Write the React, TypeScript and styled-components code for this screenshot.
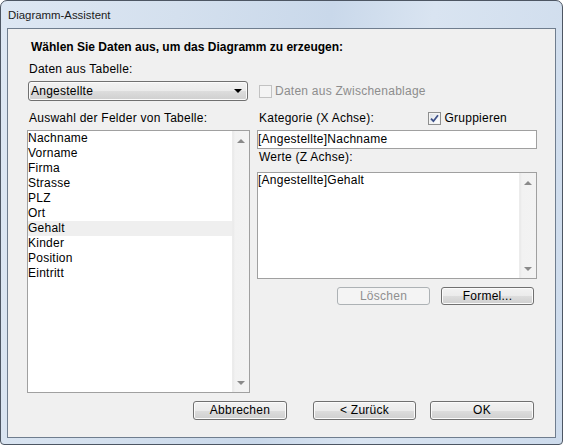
import React from "react";
import styled, { createGlobalStyle } from "styled-components";

const Global = createGlobalStyle`
  html, body { margin: 0; padding: 0; background: #ffffff; }
  body { font-family: "Liberation Sans", Arial, sans-serif; font-size: 12px; letter-spacing: 0.25px; color: #000; }
  * { box-sizing: border-box; }
`;

const Window = styled.div`
  width: 563px;
  height: 445px;
  display: flex;
  flex-direction: column;
  border: 1px solid #4d5663;
  border-radius: 7px 7px 4px 4px;
  background: linear-gradient(100deg, #dde7f3 0%, #d4e0ee 28%, #c9d8ea 52%, #d9e4f1 68%, #cddbec 100%);
  overflow: hidden;
`;

const TitleBar = styled.div`
  flex: none;
  height: 27px;
  display: flex;
  align-items: center;
  padding-left: 7px;
  font-size: 11.4px;
  letter-spacing: 0;
  color: #1a1a1a;
`;

const Client = styled.div`
  flex: 1;
  margin: 0 6px 6px;
  border: 1px solid #6f7d8e;
  background: #f0f0f0;
  padding: 11px 18px 0 19px;
  display: flex;
  flex-direction: column;
`;

const Heading = styled.div`
  font-weight: bold;
  letter-spacing: 0;
  line-height: 15px;
  margin-left: 4px;
`;

const Caption = styled.div<{ $top?: number; $left?: number; $disabled?: boolean }>`
  line-height: 15px;
  margin-top: ${(p) => p.$top ?? 0}px;
  margin-left: ${(p) => p.$left ?? 0}px;
  color: ${(p) => (p.$disabled ? "#8d8d8d" : "#000")};
  white-space: nowrap;
`;

const TwoCols = styled.div<{ $top: number }>`
  display: grid;
  grid-template-columns: 223px 280px;
  column-gap: 7px;
  margin-top: ${(p) => p.$top}px;
`;

const Row = styled.div`
  display: flex;
  align-items: center;
`;

const Combo = styled.div`
  width: 220px;
  height: 20px;
  margin-left: 1px;
  border: 1px solid #707070;
  border-radius: 3px;
  background: linear-gradient(#f2f2f2 0%, #ebebeb 50%, #dddddd 51%, #cfcfcf 100%);
  box-shadow: inset 0 0 0 1px #fbfbfb;
  display: flex;
  align-items: center;
  justify-content: space-between;
  padding: 0 5px 0 2px;
`;

const ComboArrow = styled.span`
  width: 0;
  height: 0;
  border-left: 4px solid transparent;
  border-right: 4px solid transparent;
  border-top: 4px solid #000;
`;

const CheckLabel = styled.label<{ $left?: number; $auto?: boolean; $right?: number }>`
  display: flex;
  align-items: center;
  gap: 3px;
  margin-left: ${(p) => (p.$auto ? "auto" : `${p.$left ?? 0}px`)};
  margin-right: ${(p) => p.$right ?? 0}px;
  line-height: 15px;
  white-space: nowrap;
`;

const Box = styled.span<{ $disabled?: boolean }>`
  width: 13px;
  height: 13px;
  flex: none;
  display: flex;
  align-items: center;
  justify-content: center;
  border: 1px solid ${(p) => (p.$disabled ? "#c2c2c2" : "#8e8f8f")};
  background: ${(p) =>
    p.$disabled ? "#f4f4f4" : "linear-gradient(135deg, #d8dde3 0%, #f4f6f8 60%, #ffffff 100%)"};
  box-shadow: ${(p) => (p.$disabled ? "none" : "inset 0 0 0 1px #f4f4f4")};
`;

const ListBox = styled.div<{ $height: number }>`
  height: ${(p) => p.$height}px;
  border: 1px solid #a0a0a0;
  background: #fff;
  display: flex;
`;

const ListItems = styled.div`
  flex: 1;
  display: flex;
  flex-direction: column;
`;

const Item = styled.div<{ $selected?: boolean }>`
  height: 15px;
  line-height: 15px;
  padding-left: 0;
  background: ${(p) => (p.$selected ? "#efefef" : "transparent")};
  white-space: nowrap;
`;

const ScrollBar = styled.div`
  width: 17px;
  flex: none;
  background: linear-gradient(to right, #e9e9e9 0, #f2f2f2 2px, #f3f3f3 100%);
  border-left: 1px solid #ececec;
  display: flex;
  flex-direction: column;
  justify-content: space-between;
  align-items: center;
  padding: 8px 0 7px;
`;

const Arrow = styled.span<{ $down?: boolean }>`
  width: 0;
  height: 0;
  border-left: 4px solid transparent;
  border-right: 4px solid transparent;
  ${(p) => (p.$down ? "border-top: 4px solid #8a8a8a;" : "border-bottom: 4px solid #8a8a8a;")}
`;

const TextField = styled.div`
  height: 19px;
  border: 1px solid #a0a0a0;
  background: #fff;
  line-height: 16px;
  padding-left: 0;
  white-space: nowrap;
`;

const RightCol = styled.div`
  display: flex;
  flex-direction: column;
`;

const Spacer = styled.div<{ $h: number }>`
  height: ${(p) => p.$h}px;
  flex: none;
`;

const ButtonRow = styled.div<{ $top: number }>`
  display: flex;
  justify-content: flex-end;
  gap: 11px;
  padding-right: 3px;
  margin-top: ${(p) => p.$top}px;
`;

const Button = styled.button<{ $width: number; $height?: number; $gapRight?: number }>`
  width: ${(p) => p.$width}px;
  height: ${(p) => p.$height ?? 19}px;
  margin-right: ${(p) => p.$gapRight ?? 0}px;
  padding: 0;
  font-family: "Liberation Sans", Arial, sans-serif;
  font-size: 12px;
  letter-spacing: 0.25px;
  line-height: 15px;
  color: #000;
  border: 1px solid #707070;
  border-radius: 3px;
  background: linear-gradient(#f2f2f2 0%, #ebebeb 50%, #dddddd 51%, #cfcfcf 100%);
  box-shadow: inset 0 0 0 1px #fbfbfb;

  &:disabled {
    color: #8f8f8f;
    border-color: #adb2b5;
    background: #f4f4f4;
    box-shadow: none;
  }
`;

const CheckMark = () => (
  <svg width="9" height="9" viewBox="0 0 9 9">
    <path d="M1 4.6 L3.4 7.2 L8 1.2" fill="none" stroke="#3d5088" strokeWidth="1.8" />
  </svg>
);

const fields = ["Nachname", "Vorname", "Firma", "Strasse", "PLZ", "Ort", "Gehalt", "Kinder", "Position", "Eintritt"];

export default function App() {
  return (
    <>
      <Global />
      <Window>
        <TitleBar>Diagramm-Assistent</TitleBar>
        <Client>
          <Heading>Wählen Sie Daten aus, um das Diagramm zu erzeugen:</Heading>
          <Caption $top={7} $left={2}>Daten aus Tabelle:</Caption>

          <TwoCols $top={4}>
            <Combo>
              <span>Angestellte</span>
              <ComboArrow />
            </Combo>
            <Row>
              <CheckLabel $left={2}>
                <Box $disabled />
                <Caption $disabled>Daten aus Zwischenablage</Caption>
              </CheckLabel>
            </Row>
          </TwoCols>

          <TwoCols $top={10}>
            <Caption $left={2}>Auswahl der Felder von Tabelle:</Caption>
            <Row>
              <Caption $left={2}>Kategorie (X Achse):</Caption>
              <CheckLabel $auto $right={30}>
                <Box>
                  <CheckMark />
                </Box>
                <span>Gruppieren</span>
              </CheckLabel>
            </Row>
          </TwoCols>

          <TwoCols $top={4}>
            <ListBox $height={263}>
              <ListItems>
                {fields.map((f) => (
                  <Item key={f} $selected={f === "Gehalt"}>
                    {f}
                  </Item>
                ))}
              </ListItems>
              <ScrollBar>
                <Arrow />
                <Arrow $down />
              </ScrollBar>
            </ListBox>

            <RightCol>
              <TextField>[Angestellte]Nachname</TextField>
              <Caption $top={1} $left={2}>Werte (Z Achse):</Caption>
              <Spacer $h={7} />
              <ListBox $height={107}>
                <ListItems>
                  <Item>[Angestellte]Gehalt</Item>
                </ListItems>
                <ScrollBar>
                  <Arrow />
                  <Arrow $down />
                </ScrollBar>
              </ListBox>
              <ButtonRow $top={8}>
                <Button $width={93} $height={18} disabled>
                  Löschen
                </Button>
                <Button $width={93} $height={18}>
                  Formel...
                </Button>
              </ButtonRow>
            </RightCol>
          </TwoCols>

          <ButtonRow $top={8}>
            <Button $width={94} $gapRight={15}>Abbrechen</Button>
            <Button $width={103} $gapRight={3}>&lt; Zurück</Button>
            <Button $width={104}>OK</Button>
          </ButtonRow>
        </Client>
      </Window>
    </>
  );
}
